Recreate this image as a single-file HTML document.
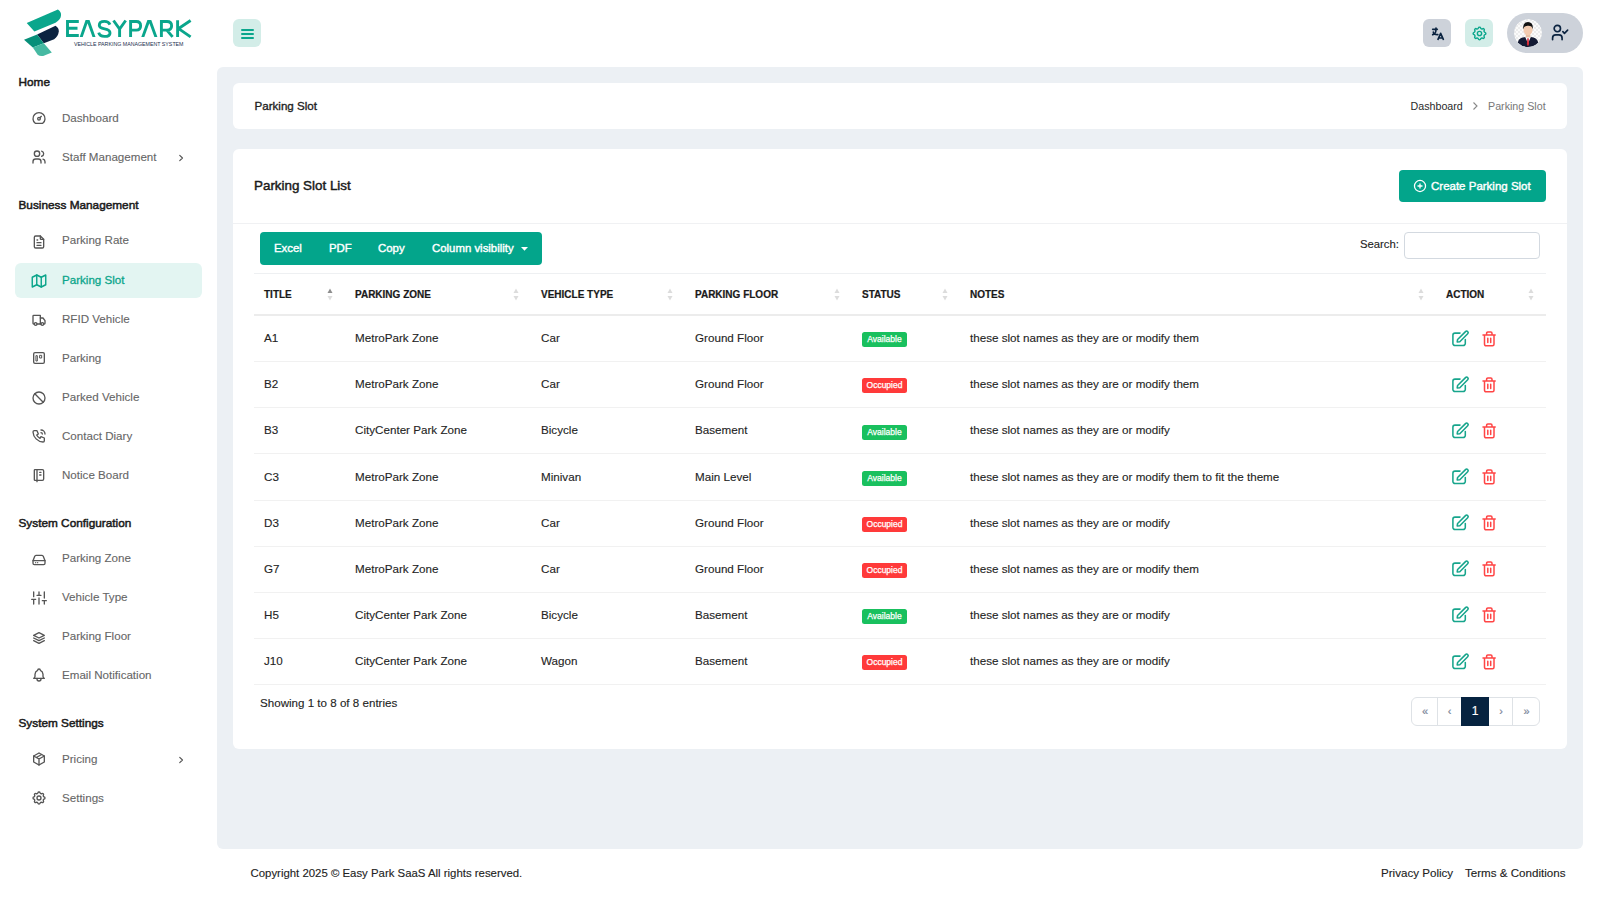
<!DOCTYPE html>
<html><head><meta charset="utf-8"><title>Parking Slot</title>
<style>
*{box-sizing:border-box;margin:0;padding:0}
html,body{width:1600px;height:900px;overflow:hidden;background:#fff;font-family:"Liberation Sans",sans-serif;color:#222}
.abs{position:absolute}
.sec{position:absolute;left:18.5px;font-size:11.8px;font-weight:normal;color:#1a1a1a;line-height:14px;white-space:nowrap;-webkit-text-stroke:0.5px #1a1a1a}
.item{position:absolute;left:15px;width:187px;height:35px;border-radius:6px;font-size:11.6px;color:#666;line-height:35px;white-space:nowrap}
.item .ic{position:absolute;left:15.5px;top:9px;width:16px;height:16px;color:#555}
.item .ic svg{display:block}
.item .tx{position:absolute;left:47px;top:-1px;-webkit-text-stroke:0.1px currentColor}
.item .chev{position:absolute;left:161px;top:13.5px;width:10px;height:10px;color:#555}
.item .chev svg{display:block}
.item.active{background:#e3f5f2;color:#0ba58b}
.item.active .tx{-webkit-text-stroke:0.3px currentColor}
.item.active .ic{color:#0ba58b}
#hamb{position:absolute;left:233px;top:19px;width:28px;height:28px;border-radius:6px;background:#d3ede8}
#hamb span{position:absolute;left:8.3px;width:13px;height:1.9px;border-radius:1px;background:#0aa68c}
#hamb span:nth-child(1){top:10px}#hamb span:nth-child(2){top:14.2px}#hamb span:nth-child(3){top:18.4px}
.hbtn{position:absolute;top:19px;width:28px;height:28px;border-radius:6px;display:flex;align-items:center;justify-content:center}
.hbtn svg{display:block}
#prof{position:absolute;left:1507px;top:13px;width:76px;height:40px;border-radius:20px;background:#cdd2da}
#avatar{position:absolute;left:7px;top:6px;width:28px;height:28px;border-radius:14px;overflow:hidden}
#avatar svg{display:block}
#main{position:absolute;left:217px;top:67px;width:1366px;height:782px;background:#ecf0f4;border-radius:6px}
.card{position:absolute;background:#fff;border-radius:6px}
.t1{position:absolute;font-size:12px;white-space:nowrap;line-height:15px}
.med{-webkit-text-stroke:0.35px currentColor}
.foot{-webkit-text-stroke:0.12px currentColor}
#btns span,#create span{-webkit-text-stroke:0.4px #fff}
.hline{position:absolute;left:254px;width:1292px}
.th{position:absolute;font-size:10px;font-weight:bold;color:#1a1a1a;-webkit-text-stroke:0.2px #1a1a1a;line-height:14px;white-space:nowrap}
.td{position:absolute;font-size:11.65px;color:#242424;-webkit-text-stroke:0.12px #242424;line-height:15px;white-space:nowrap}
.badge{position:absolute;width:45px;height:15px;border-radius:2.5px;color:#fff;font-size:8.5px;line-height:15px;text-align:center;white-space:nowrap;-webkit-text-stroke:0.25px #fff}
#btns{position:absolute;left:260px;top:232px;width:282px;height:33px;border-radius:4px;background:#03a58b}
#btns span{position:absolute;top:0;line-height:33px;color:#fff;font-size:11.4px;white-space:nowrap}
#create{position:absolute;left:1399px;top:170px;width:147px;height:32px;border-radius:4px;background:#03a58b;color:#fff;font-size:11.5px;line-height:32px;white-space:nowrap}
#search{position:absolute;left:1404px;top:232px;width:136px;height:27px;border:1px solid #d3d9e0;border-radius:4px;background:#fff}
#pag{position:absolute;left:1411px;top:697px;width:129px;height:29px;border:1px solid #dee2e6;border-radius:6px;background:#fff}
#pag div{position:absolute;top:0;height:27px;line-height:27px;text-align:center;color:#7a8599;font-size:11px;-webkit-text-stroke:0.2px currentColor}
</style></head><body>
<svg class="abs" style="left:0;top:0" width="217" height="67" viewBox="0 0 217 67">
<path d="M26.7 23 L57.9 9.6 Q61.5 12 61 15.5 Q60.8 19.5 55.5 22.7 L34.4 31.6 Z" fill="#0aa68c"/>
<path d="M37.1 34.6 L55.5 25.8 Q59 28 58.8 31.5 Q58.3 36 54.2 39.2 L43.8 43.2 Z" fill="#0b2340"/>
<path d="M24 39.8 L37.1 34.6 L43.8 43.2 L32.8 47.5 Z" fill="#078f79"/>
<path d="M32.8 47.5 L43.8 43.2 L51.8 52.4 L43.2 56 Q39.5 56.5 37.7 54.8 Z" fill="#46b9a2"/>
<g fill="none" stroke="#0aa68c" stroke-width="2.9" stroke-linejoin="miter">
<path d="M78.8 21.5 H67.5 V35.5 H78.8 M67.5 28.3 H77.5"/>

<path d="M110 24.6 C108.8 22 106.5 21.4 104.5 21.4 C101 21.4 99.3 23.2 99.3 25.2 C99.3 27.8 102 28.4 104.6 28.9 C107.6 29.5 110 30.3 110 32.9 C110 35 108 36.4 104.5 36.4 C101.5 36.4 99.4 35 98.7 32.6"/>
<path d="M113.5 20.5 L119.6 29 L125.7 20.5 M119.6 29 V36.9"/>
<path d="M130.6 36.9 V21.5 H136.3 C139.3 21.5 140.6 23.5 140.6 25.8 C140.6 28.2 139.3 30.1 136.3 30.1 H130.6"/>

<path d="M161.4 36.9 V21.5 H167 C170.2 21.5 171.6 23.5 171.6 25.8 C171.6 28.2 170.2 30.1 167 30.1 H161.4 M166.8 30.1 L172.6 36.9"/>
<path d="M177.6 20.3 V36.9 M190.6 20.5 L178.6 28.6 L190.6 36.9"/>
</g>
<path d="M79.7 36.9 L85.6 20.1 L89.5 20.1 L95.5 36.9 L92.5 36.9 L87.55 23.2 L82.7 36.9 Z M141.3 36.9 L147.4 20.1 L151.3 20.1 L157.4 36.9 L154.4 36.9 L149.35 23.2 L144.3 36.9 Z" fill="#0aa68c"/>
<text x="74" y="45.6" font-family="Liberation Sans" font-size="5.6" fill="#1d2f4d" textLength="109.5" lengthAdjust="spacingAndGlyphs">VEHICLE PARKING MANAGEMENT SYSTEM</text>
</svg>
<div id="hamb"><span></span><span></span><span></span></div>
<div class="hbtn" style="left:1423px;background:#cdd2da"><svg style="margin-top:2px;margin-left:1px" width="16" height="16" viewBox="0 0 24 24" fill="none" stroke="#0b2340" stroke-width="2.5" stroke-linecap="round" stroke-linejoin="round"><path d="M4 5h7M9 3v2c0 4.418-2.239 8-5 8M5 9c0 2.144 2.952 3.908 6.7 4"/><path d="M12 20l4-9l4 9M19.1 18h-6.2"/></svg></div>
<div class="hbtn" style="left:1465px;background:#d3ede8"><svg width="17" height="17" viewBox="0 0 24 24" fill="none" stroke="#0aa68c" stroke-width="2" stroke-linecap="round" stroke-linejoin="round"><path d="M10.325 4.317c.426-1.756 2.924-1.756 3.35 0a1.724 1.724 0 0 0 2.573 1.066c1.543-.94 3.31.826 2.37 2.37a1.724 1.724 0 0 0 1.065 2.572c1.756.426 1.756 2.924 0 3.35a1.724 1.724 0 0 0-1.066 2.573c.94 1.543-.826 3.31-2.37 2.37a1.724 1.724 0 0 0-2.572 1.065c-.426 1.756-2.924 1.756-3.35 0a1.724 1.724 0 0 0-2.573-1.066c-1.543.94-3.31-.826-2.37-2.37a1.724 1.724 0 0 0-1.065-2.572c-1.756-.426-1.756-2.924 0-3.35a1.724 1.724 0 0 0 1.066-2.573c-.94-1.543.826-3.31 2.37-2.37c1 .608 2.296.07 2.572-1.065z"/><circle cx="12" cy="12" r="3"/></svg></div>
<div id="prof">
 <div id="avatar"><svg width="28" height="28" viewBox="0 0 28 28">
  <defs><clipPath id="cc"><circle cx="14" cy="14" r="14"/></clipPath>
  <pattern id="chk" width="4" height="4" patternUnits="userSpaceOnUse"><rect width="4" height="4" fill="#fbfbfb"/><rect width="2" height="2" fill="#ececec"/><rect x="2" y="2" width="2" height="2" fill="#ececec"/></pattern></defs>
  <g clip-path="url(#cc)">
   <rect width="28" height="28" fill="url(#chk)"/>
   <path d="M3.5 27.5 Q3.2 19.8 8.5 18.6 L14 17.6 L19.5 18.6 Q24.8 19.8 24.5 27.5 Q14 29.5 3.5 27.5 Z" fill="#131a33"/>
   <path d="M11.2 18 L14 24.5 L16.8 18 Z" fill="#fff"/>
   <path d="M13.3 19.2 L14.7 19.2 L15.1 25 L14 27.5 L12.9 25 Z" fill="#d62a36"/>
   <rect x="11.8" y="13.5" width="4.4" height="5" fill="#e8bfa2"/>
   <ellipse cx="14" cy="10.6" rx="4.6" ry="5.6" fill="#f2cbb0"/>
   <path d="M9.2 10.2 Q8.6 3.2 14 3.1 Q19.4 3.2 18.8 10.2 Q18 6.6 14 6.8 Q10 6.6 9.2 10.2 Z" fill="#121212"/>
  </g></svg></div>
 <svg style="position:absolute;left:44px;top:10px" width="19" height="19" viewBox="0 0 24 24" fill="none" stroke="#0b2340" stroke-width="2.1" stroke-linecap="round" stroke-linejoin="round"><circle cx="8" cy="7" r="4"/><path d="M2 21v-2a4 4 0 0 1 4-4h4a4 4 0 0 1 4 4v2"/><path d="M15 11l2 2l4-4"/></svg>
</div>
<div id="main"></div>
<div class="card" style="left:233px;top:83px;width:1334px;height:46px"></div>
<div class="card" style="left:233px;top:149px;width:1334px;height:600px"></div>
<div class="t1 med" style="left:254.5px;top:97.5px;font-size:11.6px;color:#1f1f1f">Parking Slot</div>
<div class="t1" style="left:1410.5px;top:98.5px;font-size:10.7px;color:#2a2a2a">Dashboard</div>
<svg class="abs" style="left:1471px;top:101px" width="8" height="10" viewBox="0 0 8 10" fill="none" stroke="#888" stroke-width="1.1"><path d="M2.5 1.5 L6 5 L2.5 8.5"/></svg>
<div class="t1" style="left:1488px;top:98.5px;font-size:10.7px;color:#777">Parking Slot</div>
<div class="t1 med" style="left:254px;top:177.7px;font-size:13.4px;color:#1a1a1a;-webkit-text-stroke:0.45px #1a1a1a">Parking Slot List</div>
<div id="create"><svg class="abs" style="left:14px;top:9px" width="14" height="14" viewBox="0 0 24 24" fill="none" stroke="#fff" stroke-width="2.2" stroke-linecap="round"><circle cx="12" cy="12" r="9.5"/><path d="M8.5 12h7M12 8.5v7"/></svg><span class="abs" style="left:32px;top:0">Create Parking Slot</span></div>
<div class="hline" style="left:233px;width:1334px;top:223px;height:1px;background:#f0f1f3"></div>
<div id="btns"><span style="left:14px">Excel</span><span style="left:69px">PDF</span><span style="left:118px">Copy</span><span style="left:172px">Column visibility</span><svg class="abs" style="left:261px;top:14.5px" width="7" height="4" viewBox="0 0 7 4"><path d="M0 0h7L3.5 3.8z" fill="#fff"/></svg></div>
<div class="t1 foot" style="left:1360px;top:237.3px;font-size:11.3px;color:#242424">Search:</div>
<div id="search"></div>
<div class="hline" style="top:273px;height:1px;background:#eef0f2"></div>
<div class="th" style="left:264px;top:288px">TITLE</div>
<svg class="abs" style="left:326.5px;top:288px" width="6" height="13" viewBox="0 0 6 13"><path d="M0.5 5 L3 0.5 L5.5 5 Z" fill="#8d8d8d"/><path d="M0.5 8 L3 12.5 L5.5 8 Z" fill="#dcdcdc"/></svg>
<div class="th" style="left:355px;top:288px">PARKING ZONE</div>
<svg class="abs" style="left:512.5px;top:288px" width="6" height="13" viewBox="0 0 6 13"><path d="M0.5 5 L3 0.5 L5.5 5 Z" fill="#dcdcdc"/><path d="M0.5 8 L3 12.5 L5.5 8 Z" fill="#dcdcdc"/></svg>
<div class="th" style="left:541px;top:288px">VEHICLE TYPE</div>
<svg class="abs" style="left:666.5px;top:288px" width="6" height="13" viewBox="0 0 6 13"><path d="M0.5 5 L3 0.5 L5.5 5 Z" fill="#dcdcdc"/><path d="M0.5 8 L3 12.5 L5.5 8 Z" fill="#dcdcdc"/></svg>
<div class="th" style="left:695px;top:288px">PARKING FLOOR</div>
<svg class="abs" style="left:833.5px;top:288px" width="6" height="13" viewBox="0 0 6 13"><path d="M0.5 5 L3 0.5 L5.5 5 Z" fill="#dcdcdc"/><path d="M0.5 8 L3 12.5 L5.5 8 Z" fill="#dcdcdc"/></svg>
<div class="th" style="left:862px;top:288px">STATUS</div>
<svg class="abs" style="left:941.5px;top:288px" width="6" height="13" viewBox="0 0 6 13"><path d="M0.5 5 L3 0.5 L5.5 5 Z" fill="#dcdcdc"/><path d="M0.5 8 L3 12.5 L5.5 8 Z" fill="#dcdcdc"/></svg>
<div class="th" style="left:970px;top:288px">NOTES</div>
<svg class="abs" style="left:1417.5px;top:288px" width="6" height="13" viewBox="0 0 6 13"><path d="M0.5 5 L3 0.5 L5.5 5 Z" fill="#dcdcdc"/><path d="M0.5 8 L3 12.5 L5.5 8 Z" fill="#dcdcdc"/></svg>
<div class="th" style="left:1446px;top:288px">ACTION</div>
<svg class="abs" style="left:1527.5px;top:288px" width="6" height="13" viewBox="0 0 6 13"><path d="M0.5 5 L3 0.5 L5.5 5 Z" fill="#dcdcdc"/><path d="M0.5 8 L3 12.5 L5.5 8 Z" fill="#dcdcdc"/></svg>
<div class="hline" style="top:314px;height:2px;background:#ececec"></div>
<div class="hline" style="top:361.14px;height:1px;background:#f1f1f1"></div>
<div class="td" style="left:264px;top:330.10px">A1</div>
<div class="td" style="left:355px;top:330.10px">MetroPark Zone</div>
<div class="td" style="left:541px;top:330.10px">Car</div>
<div class="td" style="left:695px;top:330.10px">Ground Floor</div>
<div class="badge" style="left:862px;top:332.30px;background:#19c05e">Available</div>
<div class="td" style="left:970px;top:330.10px">these slot names as they are or modify them</div>
<svg class="abs" style="left:1450px;top:328.60px" width="20" height="20" viewBox="0 0 20 20" fill="none" stroke="#17a58c" stroke-width="1.55" stroke-linecap="round" stroke-linejoin="round"><path d="M10 4.1H5a2.1 2.1 0 0 0-2.1 2.1V14.4a2.1 2.1 0 0 0 2.1 2.1H13.2a2.1 2.1 0 0 0 2.1-2.1V10.5"/><path d="M7.2 12.9l0.4-2.4l7.9-7.9a1.55 1.55 0 0 1 2.2 2.2l-7.9 7.9z"/></svg>
<svg class="abs" style="left:1479px;top:328.60px" width="20" height="20" viewBox="0 0 20 20" fill="none" stroke="#ff4545" stroke-width="1.5" stroke-linecap="round" stroke-linejoin="round"><path d="M4 6h12.2M7.6 6V4.2a1.2 1.2 0 0 1 1.2-1.2h3a1.2 1.2 0 0 1 1.2 1.2V6M5.5 6v9.3a1.5 1.5 0 0 0 1.5 1.5h6.5a1.5 1.5 0 0 0 1.5-1.5V6M8.8 9.3v4.3M11.7 9.3v4.3"/></svg>
<div class="hline" style="top:407.28px;height:1px;background:#f1f1f1"></div>
<div class="td" style="left:264px;top:376.24px">B2</div>
<div class="td" style="left:355px;top:376.24px">MetroPark Zone</div>
<div class="td" style="left:541px;top:376.24px">Car</div>
<div class="td" style="left:695px;top:376.24px">Ground Floor</div>
<div class="badge" style="left:862px;top:378.44px;background:#ff3a3a">Occupied</div>
<div class="td" style="left:970px;top:376.24px">these slot names as they are or modify them</div>
<svg class="abs" style="left:1450px;top:374.74px" width="20" height="20" viewBox="0 0 20 20" fill="none" stroke="#17a58c" stroke-width="1.55" stroke-linecap="round" stroke-linejoin="round"><path d="M10 4.1H5a2.1 2.1 0 0 0-2.1 2.1V14.4a2.1 2.1 0 0 0 2.1 2.1H13.2a2.1 2.1 0 0 0 2.1-2.1V10.5"/><path d="M7.2 12.9l0.4-2.4l7.9-7.9a1.55 1.55 0 0 1 2.2 2.2l-7.9 7.9z"/></svg>
<svg class="abs" style="left:1479px;top:374.74px" width="20" height="20" viewBox="0 0 20 20" fill="none" stroke="#ff4545" stroke-width="1.5" stroke-linecap="round" stroke-linejoin="round"><path d="M4 6h12.2M7.6 6V4.2a1.2 1.2 0 0 1 1.2-1.2h3a1.2 1.2 0 0 1 1.2 1.2V6M5.5 6v9.3a1.5 1.5 0 0 0 1.5 1.5h6.5a1.5 1.5 0 0 0 1.5-1.5V6M8.8 9.3v4.3M11.7 9.3v4.3"/></svg>
<div class="hline" style="top:453.42px;height:1px;background:#f1f1f1"></div>
<div class="td" style="left:264px;top:422.38px">B3</div>
<div class="td" style="left:355px;top:422.38px">CityCenter Park Zone</div>
<div class="td" style="left:541px;top:422.38px">Bicycle</div>
<div class="td" style="left:695px;top:422.38px">Basement</div>
<div class="badge" style="left:862px;top:424.58px;background:#19c05e">Available</div>
<div class="td" style="left:970px;top:422.38px">these slot names as they are or modify</div>
<svg class="abs" style="left:1450px;top:420.88px" width="20" height="20" viewBox="0 0 20 20" fill="none" stroke="#17a58c" stroke-width="1.55" stroke-linecap="round" stroke-linejoin="round"><path d="M10 4.1H5a2.1 2.1 0 0 0-2.1 2.1V14.4a2.1 2.1 0 0 0 2.1 2.1H13.2a2.1 2.1 0 0 0 2.1-2.1V10.5"/><path d="M7.2 12.9l0.4-2.4l7.9-7.9a1.55 1.55 0 0 1 2.2 2.2l-7.9 7.9z"/></svg>
<svg class="abs" style="left:1479px;top:420.88px" width="20" height="20" viewBox="0 0 20 20" fill="none" stroke="#ff4545" stroke-width="1.5" stroke-linecap="round" stroke-linejoin="round"><path d="M4 6h12.2M7.6 6V4.2a1.2 1.2 0 0 1 1.2-1.2h3a1.2 1.2 0 0 1 1.2 1.2V6M5.5 6v9.3a1.5 1.5 0 0 0 1.5 1.5h6.5a1.5 1.5 0 0 0 1.5-1.5V6M8.8 9.3v4.3M11.7 9.3v4.3"/></svg>
<div class="hline" style="top:499.56px;height:1px;background:#f1f1f1"></div>
<div class="td" style="left:264px;top:468.52px">C3</div>
<div class="td" style="left:355px;top:468.52px">MetroPark Zone</div>
<div class="td" style="left:541px;top:468.52px">Minivan</div>
<div class="td" style="left:695px;top:468.52px">Main Level</div>
<div class="badge" style="left:862px;top:470.72px;background:#19c05e">Available</div>
<div class="td" style="left:970px;top:468.52px">these slot names as they are or modify them to fit the theme</div>
<svg class="abs" style="left:1450px;top:467.02px" width="20" height="20" viewBox="0 0 20 20" fill="none" stroke="#17a58c" stroke-width="1.55" stroke-linecap="round" stroke-linejoin="round"><path d="M10 4.1H5a2.1 2.1 0 0 0-2.1 2.1V14.4a2.1 2.1 0 0 0 2.1 2.1H13.2a2.1 2.1 0 0 0 2.1-2.1V10.5"/><path d="M7.2 12.9l0.4-2.4l7.9-7.9a1.55 1.55 0 0 1 2.2 2.2l-7.9 7.9z"/></svg>
<svg class="abs" style="left:1479px;top:467.02px" width="20" height="20" viewBox="0 0 20 20" fill="none" stroke="#ff4545" stroke-width="1.5" stroke-linecap="round" stroke-linejoin="round"><path d="M4 6h12.2M7.6 6V4.2a1.2 1.2 0 0 1 1.2-1.2h3a1.2 1.2 0 0 1 1.2 1.2V6M5.5 6v9.3a1.5 1.5 0 0 0 1.5 1.5h6.5a1.5 1.5 0 0 0 1.5-1.5V6M8.8 9.3v4.3M11.7 9.3v4.3"/></svg>
<div class="hline" style="top:545.70px;height:1px;background:#f1f1f1"></div>
<div class="td" style="left:264px;top:514.66px">D3</div>
<div class="td" style="left:355px;top:514.66px">MetroPark Zone</div>
<div class="td" style="left:541px;top:514.66px">Car</div>
<div class="td" style="left:695px;top:514.66px">Ground Floor</div>
<div class="badge" style="left:862px;top:516.86px;background:#ff3a3a">Occupied</div>
<div class="td" style="left:970px;top:514.66px">these slot names as they are or modify</div>
<svg class="abs" style="left:1450px;top:513.16px" width="20" height="20" viewBox="0 0 20 20" fill="none" stroke="#17a58c" stroke-width="1.55" stroke-linecap="round" stroke-linejoin="round"><path d="M10 4.1H5a2.1 2.1 0 0 0-2.1 2.1V14.4a2.1 2.1 0 0 0 2.1 2.1H13.2a2.1 2.1 0 0 0 2.1-2.1V10.5"/><path d="M7.2 12.9l0.4-2.4l7.9-7.9a1.55 1.55 0 0 1 2.2 2.2l-7.9 7.9z"/></svg>
<svg class="abs" style="left:1479px;top:513.16px" width="20" height="20" viewBox="0 0 20 20" fill="none" stroke="#ff4545" stroke-width="1.5" stroke-linecap="round" stroke-linejoin="round"><path d="M4 6h12.2M7.6 6V4.2a1.2 1.2 0 0 1 1.2-1.2h3a1.2 1.2 0 0 1 1.2 1.2V6M5.5 6v9.3a1.5 1.5 0 0 0 1.5 1.5h6.5a1.5 1.5 0 0 0 1.5-1.5V6M8.8 9.3v4.3M11.7 9.3v4.3"/></svg>
<div class="hline" style="top:591.84px;height:1px;background:#f1f1f1"></div>
<div class="td" style="left:264px;top:560.80px">G7</div>
<div class="td" style="left:355px;top:560.80px">MetroPark Zone</div>
<div class="td" style="left:541px;top:560.80px">Car</div>
<div class="td" style="left:695px;top:560.80px">Ground Floor</div>
<div class="badge" style="left:862px;top:563.00px;background:#ff3a3a">Occupied</div>
<div class="td" style="left:970px;top:560.80px">these slot names as they are or modify them</div>
<svg class="abs" style="left:1450px;top:559.30px" width="20" height="20" viewBox="0 0 20 20" fill="none" stroke="#17a58c" stroke-width="1.55" stroke-linecap="round" stroke-linejoin="round"><path d="M10 4.1H5a2.1 2.1 0 0 0-2.1 2.1V14.4a2.1 2.1 0 0 0 2.1 2.1H13.2a2.1 2.1 0 0 0 2.1-2.1V10.5"/><path d="M7.2 12.9l0.4-2.4l7.9-7.9a1.55 1.55 0 0 1 2.2 2.2l-7.9 7.9z"/></svg>
<svg class="abs" style="left:1479px;top:559.30px" width="20" height="20" viewBox="0 0 20 20" fill="none" stroke="#ff4545" stroke-width="1.5" stroke-linecap="round" stroke-linejoin="round"><path d="M4 6h12.2M7.6 6V4.2a1.2 1.2 0 0 1 1.2-1.2h3a1.2 1.2 0 0 1 1.2 1.2V6M5.5 6v9.3a1.5 1.5 0 0 0 1.5 1.5h6.5a1.5 1.5 0 0 0 1.5-1.5V6M8.8 9.3v4.3M11.7 9.3v4.3"/></svg>
<div class="hline" style="top:637.98px;height:1px;background:#f1f1f1"></div>
<div class="td" style="left:264px;top:606.94px">H5</div>
<div class="td" style="left:355px;top:606.94px">CityCenter Park Zone</div>
<div class="td" style="left:541px;top:606.94px">Bicycle</div>
<div class="td" style="left:695px;top:606.94px">Basement</div>
<div class="badge" style="left:862px;top:609.14px;background:#19c05e">Available</div>
<div class="td" style="left:970px;top:606.94px">these slot names as they are or modify</div>
<svg class="abs" style="left:1450px;top:605.44px" width="20" height="20" viewBox="0 0 20 20" fill="none" stroke="#17a58c" stroke-width="1.55" stroke-linecap="round" stroke-linejoin="round"><path d="M10 4.1H5a2.1 2.1 0 0 0-2.1 2.1V14.4a2.1 2.1 0 0 0 2.1 2.1H13.2a2.1 2.1 0 0 0 2.1-2.1V10.5"/><path d="M7.2 12.9l0.4-2.4l7.9-7.9a1.55 1.55 0 0 1 2.2 2.2l-7.9 7.9z"/></svg>
<svg class="abs" style="left:1479px;top:605.44px" width="20" height="20" viewBox="0 0 20 20" fill="none" stroke="#ff4545" stroke-width="1.5" stroke-linecap="round" stroke-linejoin="round"><path d="M4 6h12.2M7.6 6V4.2a1.2 1.2 0 0 1 1.2-1.2h3a1.2 1.2 0 0 1 1.2 1.2V6M5.5 6v9.3a1.5 1.5 0 0 0 1.5 1.5h6.5a1.5 1.5 0 0 0 1.5-1.5V6M8.8 9.3v4.3M11.7 9.3v4.3"/></svg>
<div class="hline" style="top:684.12px;height:1px;background:#f1f1f1"></div>
<div class="td" style="left:264px;top:653.08px">J10</div>
<div class="td" style="left:355px;top:653.08px">CityCenter Park Zone</div>
<div class="td" style="left:541px;top:653.08px">Wagon</div>
<div class="td" style="left:695px;top:653.08px">Basement</div>
<div class="badge" style="left:862px;top:655.28px;background:#ff3a3a">Occupied</div>
<div class="td" style="left:970px;top:653.08px">these slot names as they are or modify</div>
<svg class="abs" style="left:1450px;top:651.58px" width="20" height="20" viewBox="0 0 20 20" fill="none" stroke="#17a58c" stroke-width="1.55" stroke-linecap="round" stroke-linejoin="round"><path d="M10 4.1H5a2.1 2.1 0 0 0-2.1 2.1V14.4a2.1 2.1 0 0 0 2.1 2.1H13.2a2.1 2.1 0 0 0 2.1-2.1V10.5"/><path d="M7.2 12.9l0.4-2.4l7.9-7.9a1.55 1.55 0 0 1 2.2 2.2l-7.9 7.9z"/></svg>
<svg class="abs" style="left:1479px;top:651.58px" width="20" height="20" viewBox="0 0 20 20" fill="none" stroke="#ff4545" stroke-width="1.5" stroke-linecap="round" stroke-linejoin="round"><path d="M4 6h12.2M7.6 6V4.2a1.2 1.2 0 0 1 1.2-1.2h3a1.2 1.2 0 0 1 1.2 1.2V6M5.5 6v9.3a1.5 1.5 0 0 0 1.5 1.5h6.5a1.5 1.5 0 0 0 1.5-1.5V6M8.8 9.3v4.3M11.7 9.3v4.3"/></svg>
<div class="t1 foot" style="left:260px;top:695px;font-size:11.6px;color:#242424">Showing 1 to 8 of 8 entries</div>
<div id="pag">
 <div style="left:0;width:26px">&laquo;</div>
 <div style="left:25px;width:1px;background:#dee2e6"></div>
 <div style="left:26px;width:23px">&lsaquo;</div>
 <div style="left:49px;top:-1px;height:29px;line-height:29px;width:28px;background:#062340;color:#fff;font-size:12px">1</div>
 <div style="left:77px;width:24px">&rsaquo;</div>
 <div style="left:100px;width:1px;background:#dee2e6"></div>
 <div style="left:101px;width:27px">&raquo;</div>
</div>
<div class="t1 foot" style="left:250.5px;top:865.6px;font-size:11.4px;color:#222">Copyright 2025 &copy; Easy Park SaaS All rights reserved.</div>
<div class="t1 foot" style="left:1381px;top:864.7px;font-size:11.6px;color:#222">Privacy Policy</div>
<div class="t1 foot" style="left:1465px;top:864.7px;font-size:11.6px;color:#222">Terms &amp; Conditions</div>
<div class="sec" style="top:75.0px">Home</div>
<div class="item" style="top:100.5px"><span class="ic" style="margin-top:0px;margin-left:0px"><svg width="16" height="16" viewBox="0 0 24 24" fill="none" stroke="currentColor" stroke-width="2" stroke-linecap="round" stroke-linejoin="round"><circle cx="12" cy="13" r="2"/><path d="M13.45 11.55l2.05-2.05"/><path d="M6.4 20a9 9 0 1 1 11.2 0z"/></svg></span><span class="tx">Dashboard</span></div>
<div class="item" style="top:139.7px"><span class="ic" style="margin-top:0px;margin-left:0px"><svg width="16" height="16" viewBox="0 0 24 24" fill="none" stroke="currentColor" stroke-width="2" stroke-linecap="round" stroke-linejoin="round"><circle cx="9" cy="7" r="4"/><path d="M3 21v-2a4 4 0 0 1 4-4h4a4 4 0 0 1 4 4v2"/><path d="M16 3.13a4 4 0 0 1 0 7.75"/><path d="M21 21v-2a4 4 0 0 0-3-3.85"/></svg></span><span class="tx">Staff Management</span><span class="chev"><svg width="10" height="10" viewBox="0 0 24 24" fill="none" stroke="currentColor" stroke-width="2.8" stroke-linecap="round" stroke-linejoin="round"><path d="M9 5.5l6.5 6.5l-6.5 6.5"/></svg></span></div>
<div class="sec" style="top:197.5px">Business Management</div>
<div class="item" style="top:223.0px"><span class="ic" style="margin-top:1.5px;margin-left:0px"><svg width="16" height="16" viewBox="0 0 24 24" fill="none" stroke="currentColor" stroke-width="2" stroke-linecap="round" stroke-linejoin="round"><path d="M14 3v4a1 1 0 0 0 1 1h4"/><path d="M17 21h-10a2 2 0 0 1-2-2v-14a2 2 0 0 1 2-2h7l5 5v11a2 2 0 0 1-2 2z"/><path d="M9 9h1M9 13h6M9 17h6"/></svg></span><span class="tx">Parking Rate</span></div>
<div class="item active" style="top:262.5px"><span class="ic" style="margin-top:0px;margin-left:-1px"><svg width="18" height="18" viewBox="0 0 24 24" fill="none" stroke="currentColor" stroke-width="1.9" stroke-linecap="round" stroke-linejoin="round"><path d="M3 7l6-3l6 3l6-3v13l-6 3l-6-3l-6 3v-13"/><path d="M9 4v13M15 7v13"/></svg></span><span class="tx">Parking Slot</span></div>
<div class="item" style="top:301.5px"><span class="ic" style="margin-top:1px;margin-left:0px"><svg width="16" height="16" viewBox="0 0 24 24" fill="none" stroke="currentColor" stroke-width="2" stroke-linecap="round" stroke-linejoin="round"><circle cx="7" cy="18" r="2"/><circle cx="17" cy="18" r="2"/><path d="M5 18h-1a1 1 0 0 1-1-1v-11a1 1 0 0 1 1-1h10v13h-5"/><path d="M14 9h4l3 4v4a1 1 0 0 1-1 1h-1"/><path d="M14 18h1"/></svg></span><span class="tx">RFID Vehicle</span></div>
<div class="item" style="top:340.7px"><span class="ic" style="margin-top:0.5px;margin-left:0px"><svg width="16" height="16" viewBox="0 0 24 24" fill="none" stroke="currentColor" stroke-width="2" stroke-linecap="round" stroke-linejoin="round"><rect x="4" y="4" width="16" height="16" rx="2"/><path d="M8 8.5h1.5v8h-1.5z" stroke-width="1.5"/><path d="M13.5 8h2.5v4h-2.5z" stroke-width="1.5"/></svg></span><span class="tx">Parking</span></div>
<div class="item" style="top:379.8px"><span class="ic" style="margin-top:1px;margin-left:0px"><svg width="16" height="16" viewBox="0 0 24 24" fill="none" stroke="currentColor" stroke-width="2" stroke-linecap="round" stroke-linejoin="round"><circle cx="12" cy="12" r="9"/><path d="M5.7 5.7l12.6 12.6"/></svg></span><span class="tx">Parked Vehicle</span></div>
<div class="item" style="top:419.0px"><span class="ic" style="margin-top:0px;margin-left:0px"><svg width="16" height="16" viewBox="0 0 24 24" fill="none" stroke="currentColor" stroke-width="2" stroke-linecap="round" stroke-linejoin="round"><path d="M5 4h4l2 5l-2.5 1.5a11 11 0 0 0 5 5l1.5-2.5l5 2v4a2 2 0 0 1-2 2a16 16 0 0 1-15-15a2 2 0 0 1 2-2"/><path d="M15 7a2 2 0 0 1 2 2"/><path d="M15 3a6 6 0 0 1 6 6"/></svg></span><span class="tx">Contact Diary</span></div>
<div class="item" style="top:458.1px"><span class="ic" style="margin-top:0px;margin-left:0px"><svg width="16" height="16" viewBox="0 0 24 24" fill="none" stroke="currentColor" stroke-width="2" stroke-linecap="round" stroke-linejoin="round"><path d="M6 4h11a2 2 0 0 1 2 2v12a2 2 0 0 1-2 2h-11a1 1 0 0 1-1-1v-14a1 1 0 0 1 1-1m3 0v18"/><path d="M13 8h2M13 12h2"/></svg></span><span class="tx">Notice Board</span></div>
<div class="sec" style="top:516.0px">System Configuration</div>
<div class="item" style="top:541.0px"><span class="ic" style="margin-top:1.5px;margin-left:0px"><svg width="16" height="16" viewBox="0 0 24 24" fill="none" stroke="currentColor" stroke-width="2" stroke-linecap="round" stroke-linejoin="round"><path d="M3 13l2.6-6.5a2 2 0 0 1 1.9-1.5h9a2 2 0 0 1 1.9 1.5l2.6 6.5v4a2 2 0 0 1-2 2h-14a2 2 0 0 1-2-2z"/><path d="M3 13h18"/><path d="M7 16h.01M10 16h.01"/></svg></span><span class="tx">Parking Zone</span></div>
<div class="item" style="top:580.1px"><span class="ic" style="margin-top:1px;margin-left:0px"><svg width="16" height="16" viewBox="0 0 24 24" fill="none" stroke="currentColor" stroke-width="2" stroke-linecap="round" stroke-linejoin="round"><path d="M4 21v-7M4 10v-7M12 21v-9M12 8v-5M20 21v-5M20 12v-9M1 14h6M9 8h6M17 16h6"/></svg></span><span class="tx">Vehicle Type</span></div>
<div class="item" style="top:619.3px"><span class="ic" style="margin-top:1.8px;margin-left:0px"><svg width="16" height="16" viewBox="0 0 24 24" fill="none" stroke="currentColor" stroke-width="2" stroke-linecap="round" stroke-linejoin="round"><path d="M12 4l-8 4l8 4l8-4l-8-4"/><path d="M4 12l8 4l8-4"/><path d="M4 16l8 4l8-4"/></svg></span><span class="tx">Parking Floor</span></div>
<div class="item" style="top:658.4px"><span class="ic" style="margin-top:0px;margin-left:0px"><svg width="16" height="16" viewBox="0 0 24 24" fill="none" stroke="currentColor" stroke-width="2" stroke-linecap="round" stroke-linejoin="round"><path d="M10 5a2 2 0 1 1 4 0a7 7 0 0 1 4 6v3a4 4 0 0 0 2 3h-16a4 4 0 0 0 2-3v-3a7 7 0 0 1 4-6"/><path d="M9 17v1a3 3 0 0 0 6 0v-1"/></svg></span><span class="tx">Email Notification</span></div>
<div class="sec" style="top:716.0px">System Settings</div>
<div class="item" style="top:741.8px"><span class="ic" style="margin-top:0px;margin-left:0px"><svg width="16" height="16" viewBox="0 0 24 24" fill="none" stroke="currentColor" stroke-width="2" stroke-linecap="round" stroke-linejoin="round"><path d="M12 3l8 4.5v9l-8 4.5l-8-4.5v-9l8-4.5"/><path d="M12 12l8-4.5M12 12v9M12 12l-8-4.5M16 5.25l-8 4.5"/></svg></span><span class="tx">Pricing</span><span class="chev"><svg width="10" height="10" viewBox="0 0 24 24" fill="none" stroke="currentColor" stroke-width="2.8" stroke-linecap="round" stroke-linejoin="round"><path d="M9 5.5l6.5 6.5l-6.5 6.5"/></svg></span></div>
<div class="item" style="top:781.0px"><span class="ic" style="margin-top:0px;margin-left:0px"><svg width="16" height="16" viewBox="0 0 24 24" fill="none" stroke="currentColor" stroke-width="2" stroke-linecap="round" stroke-linejoin="round"><path d="M10.325 4.317c.426-1.756 2.924-1.756 3.35 0a1.724 1.724 0 0 0 2.573 1.066c1.543-.94 3.31.826 2.37 2.37a1.724 1.724 0 0 0 1.065 2.572c1.756.426 1.756 2.924 0 3.35a1.724 1.724 0 0 0-1.066 2.573c.94 1.543-.826 3.31-2.37 2.37a1.724 1.724 0 0 0-2.572 1.065c-.426 1.756-2.924 1.756-3.35 0a1.724 1.724 0 0 0-2.573-1.066c-1.543.94-3.31-.826-2.37-2.37a1.724 1.724 0 0 0-1.065-2.572c-1.756-.426-1.756-2.924 0-3.35a1.724 1.724 0 0 0 1.066-2.573c-.94-1.543.826-3.31 2.37-2.37c1 .608 2.296.07 2.572-1.065z"/><circle cx="12" cy="12" r="3"/></svg></span><span class="tx">Settings</span></div>
</body></html>
